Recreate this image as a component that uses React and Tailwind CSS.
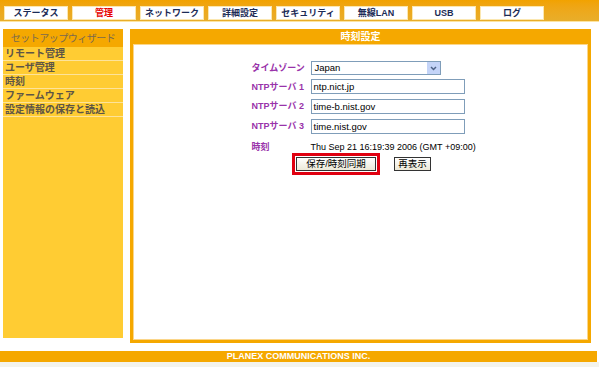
import React from 'react';

const navItems = ['ステータス', '管理', 'ネットワーク', '詳細設定', 'セキュリティ', '無線LAN', 'USB', 'ログ'];
const sideItems = ['リモート管理', 'ユーザ管理', '時刻', 'ファームウェア', '設定情報の保存と読込'];

const font = { fontFamily: '"Liberation Sans", "Noto Sans CJK JP", sans-serif' };

export default function App() {
  return (
    <div className="w-[599px] h-[367px] bg-white flex flex-col overflow-hidden" style={font}>
      {/* top navigation */}
      <div className="h-[22px] bg-gradient-to-b from-[#f2a200] to-[#e8ae2a] border-b border-[#fde4a0] flex items-start gap-1 pl-1 pt-[6px]">
        {navItems.map((item) => (
          <div
            key={item}
            className={`w-[64px] h-[14px] bg-white border border-[#fbe7b0] flex items-center justify-center text-[9px] font-bold leading-none whitespace-nowrap ${
              item === '管理' ? 'text-[#e60000]' : 'text-[#1c2b55]'
            }`}
          >
            {item}
          </div>
        ))}
      </div>

      <div className="flex gap-[7px] pl-[3px] pt-[7px] h-[323px]">
        {/* sidebar */}
        <div className="w-[120px] h-[309px] bg-[#ffcc33] flex flex-col">
          <div className="h-[18px] bg-[#f5a800] flex items-center justify-center text-[10px] tracking-[-0.5px] text-[#7a6a4e] whitespace-nowrap">
            セットアップウィザード
          </div>
          {sideItems.map((item) => (
            <div
              key={item}
              className="h-[14px] border-b border-[#fde39a] flex items-center pl-[2px] text-[10px] text-[#5e5546] font-bold leading-none whitespace-nowrap"
            >
              {item}
            </div>
          ))}
        </div>

        {/* main panel */}
        <div className="w-[461px] h-[314px] bg-[#f5a800] p-[3px] pt-0 flex flex-col">
          <div className="h-[15px] flex items-center justify-center text-white font-bold text-[10px]">
            時刻設定
          </div>
          <div className="flex-1 bg-white border border-[#fbd68a] flex flex-col items-center pt-[16px]">
            <div className="grid grid-cols-[59px_1fr] gap-y-[5px] items-center w-[220px] ml-[2px] text-[9.5px] leading-none">
              <div className="text-[#9933aa] font-bold text-[9px] whitespace-nowrap">タイムゾーン</div>
              <div className="w-[130px] h-[14px] border border-[#7f9db9] flex items-center">
                <span className="flex-1 pl-[3px] text-black">Japan</span>
                <span className="w-[13px] h-[12px] bg-[#c4d4f8] flex items-center justify-center">
                  <svg width="7" height="5" viewBox="0 0 7 5">
                    <path d="M1 1 L3.5 3.5 L6 1" stroke="#4d6185" strokeWidth="1.5" fill="none" />
                  </svg>
                </span>
              </div>
              {['ntp.nict.jp', 'time-b.nist.gov', 'time.nist.gov'].map((v, i) => (
                <React.Fragment key={v}>
                  <div className="text-[#9933aa] font-bold text-[9px] whitespace-nowrap">NTPサーバ {i + 1}</div>
                  <div className={`w-[154px] h-[15px] border border-[#7f9db9] flex items-center pl-[2px] text-black ${i === 0 ? 'mt-[-1px]' : ''}`}>
                    {v}
                  </div>
                </React.Fragment>
              ))}
              <div className="text-[#9933aa] font-bold text-[9px] mt-[4px]">時刻</div>
              <div className="text-black mt-[4px] whitespace-nowrap text-[9px]">Thu Sep 21 16:19:39 2006 (GMT +09:00)</div>
            </div>
            <div className="flex items-center gap-[14px] mt-[1px] ml-[2px]">
              <div className="border-[3px] border-[#e00010] p-px">
                <div className="w-[80px] h-[14px] border border-[#333] bg-gradient-to-b from-white to-[#ece9d8] flex items-center justify-center text-[9.5px] text-black">
                  保存/時刻同期
                </div>
              </div>
              <div className="w-[37px] h-[14px] border border-[#333] bg-gradient-to-b from-white to-[#ece9d8] flex items-center justify-center text-[9.5px] text-black">
                再表示
              </div>
            </div>
          </div>
        </div>
      </div>

      {/* footer */}
      <div className="mt-[6px] h-[11px] w-[597px] bg-[#f5a800] flex items-center justify-center text-white font-bold text-[9px] leading-none">
        PLANEX COMMUNICATIONS INC.
      </div>
      <div className="flex-1 bg-[#f3f3ec]"></div>
    </div>
  );
}
